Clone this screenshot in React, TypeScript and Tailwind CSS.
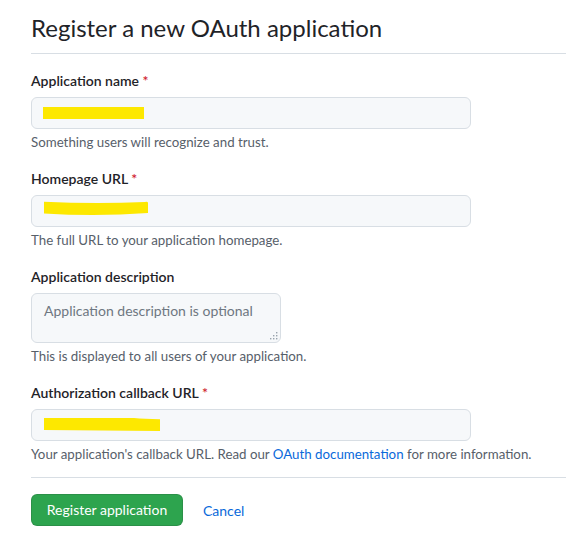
import type { ReactNode } from "react";

/**
 * GitHub-style "register OAuth app" form. Field values are blacked out
 * (well, yellowed out) with marker strokes, so the inputs hold a mark
 * instead of text.
 */

function Field({
  label,
  required,
  note,
  children,
}: {
  label: string;
  required?: boolean;
  note: ReactNode;
  children: ReactNode;
}) {
  return (
    <div className="flex flex-col">
      <label className="text-[14px] leading-[21px] font-semibold text-[#1f2328] mb-[6px]">
        {label}
        {required && <span className="text-[#cf222e]"> *</span>}
      </label>
      {children}
      <p className="mt-[4px] text-[13.3px] leading-[18px] text-[#57606a]">{note}</p>
    </div>
  );
}

function FakeInput({ children }: { children: ReactNode }) {
  return (
    <div className="h-8 w-[440px] rounded-md border border-[#d8dee4] bg-[#f6f8fa] flex items-center pl-[11px]">
      {children}
    </div>
  );
}

export default function App() {
  return (
    <div className="min-h-screen bg-white pl-[31px] font-['Lato','Liberation_Sans',sans-serif] text-[#1f2328]">
      <div className="pt-[10px] pb-[7px] border-b border-[#d8dee4]">
        <h1 className="text-[24px] leading-[36px] font-normal">Register a new OAuth application</h1>
      </div>

      <form className="mt-4 flex flex-col gap-[17px]">
        <Field label="Application name" required note="Something users will recognize and trust.">
          <FakeInput>
            <span className="block w-[101px] h-[12px] bg-[#fde800]" />
          </FakeInput>
        </Field>

        <Field label="Homepage URL" required note="The full URL to your application homepage.">
          <FakeInput>
            <svg width="104" height="16" viewBox="0 0 104 16" className="self-start mt-[5px] ml-[1px]">
              <path d="M0 0.8 Q52 3.2 101 1 Q104 0.4 104 2 L104 12 Q52 15.6 0 12.4 Z" fill="#fde800" />
            </svg>
          </FakeInput>
        </Field>

        <Field label="Application description" note="This is displayed to all users of your application.">
          <div className="relative w-[250px] h-[50px]">
            <textarea
              placeholder="Application description is optional"
              className="block w-full h-full resize-none rounded-md border border-[#d8dee4] bg-[#f6f8fa] px-3 pt-[7px] text-[14px] leading-[20px] placeholder:text-[#6e7781] outline-none"
            />
            {/* resize grip, dotted like the Windows one */}
            <svg width="8" height="8" viewBox="0 0 8 8" className="absolute right-[3px] bottom-[3px]" fill="#9aa3ad">
              <rect x="6" y="0" width="1.4" height="1.4" />
              <rect x="3" y="3" width="1.4" height="1.4" />
              <rect x="6" y="3" width="1.4" height="1.4" />
              <rect x="0" y="6" width="1.4" height="1.4" />
              <rect x="3" y="6" width="1.4" height="1.4" />
              <rect x="6" y="6" width="1.4" height="1.4" />
            </svg>
          </div>
        </Field>

        <Field
          label="Authorization callback URL"
          required
          note={
            <>
              Your application's callback URL. Read our{" "}
              <a href="#" className="text-[#0969da]">
                OAuth documentation
              </a>{" "}
              for more information.
            </>
          }
        >
          <FakeInput>
            <svg width="116" height="14" viewBox="0 0 116 14" className="ml-[1px]">
              <path d="M0 0 L90 0 Q100 1 116 1.3 L116 13 L0 12 Z" fill="#fde800" />
            </svg>
          </FakeInput>
        </Field>
      </form>

      <div className="mt-[14px] border-t border-[#d8dee4] pt-4 flex items-center gap-5">
        <button
          type="button"
          className="h-8 w-[152px] rounded-md border border-[rgba(31,35,40,0.15)] bg-[#2da44e] text-white text-[14px] leading-5"
        >
          Register application
        </button>
        <a href="#" className="text-[14px] text-[#0969da]">
          Cancel
        </a>
      </div>
    </div>
  );
}
